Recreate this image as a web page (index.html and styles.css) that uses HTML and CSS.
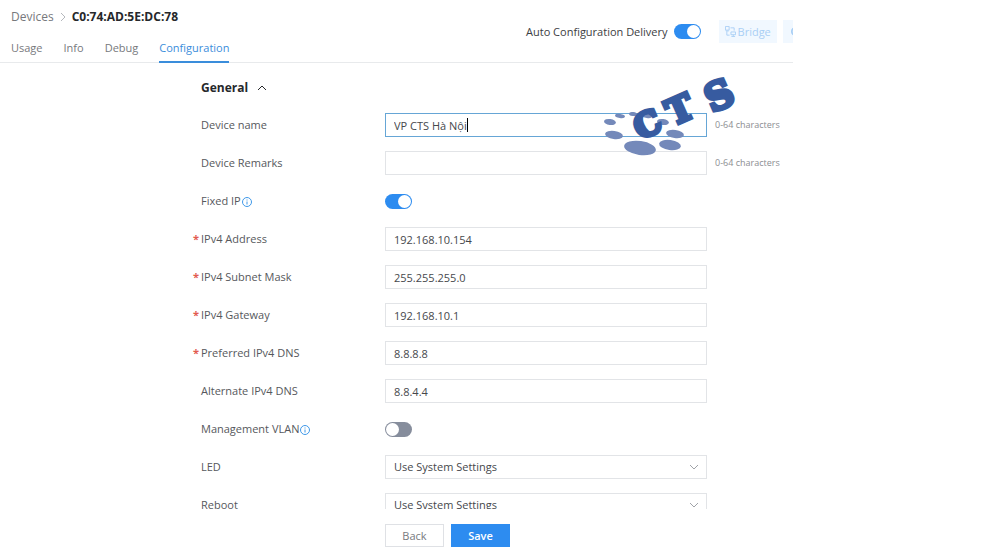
FILE: index.html
```html
<!DOCTYPE html>
<html lang="en">
<head>
<meta charset="utf-8">
<meta name="viewport" content="width=device-width, initial-scale=1">
<title>Device Configuration</title>
<link rel="stylesheet" href="styles.css">
</head>
<body>
<div class="app">
  <header class="header">
    <div class="header-main">
      <nav class="crumbs" aria-label="Breadcrumb">
        <a href="#">Devices</a>
        <svg class="crumb-sep" viewBox="0 0 6 10" aria-hidden="true"><path d="M1 1l4 4-4 4"/></svg>
        <strong>C0:74:AD:5E:DC:78</strong>
      </nav>
      <nav class="tabs" aria-label="Sections">
        <a href="#">Usage</a>
        <a href="#">Info</a>
        <a href="#">Debug</a>
        <a href="#" class="active" aria-current="page">Configuration</a>
      </nav>
    </div>
    <div class="actions">
      <label class="delivery" for="auto">Auto Configuration Delivery</label>
      <input class="switch" type="checkbox" id="auto" checked>
      <button class="tool" type="button" disabled>
        <svg class="tool-icon" viewBox="0 0 12 12" aria-hidden="true"><path d="M.5.5h4v4h-4zM6.500 6.500h5v3h-5zM9 9.500v2M7 11.500h4M6 2h4v3M2 6v4h3M1 5.500h3"/></svg>
        Bridge
      </button>
      <button class="tool tool-cut" type="button" disabled aria-label="More actions">
        <svg class="tool-icon" viewBox="0 0 12 12" aria-hidden="true"><circle cx="6" cy="6" r="4"/></svg>
      </button>
    </div>
  </header>

  <form class="form">
    <div class="fields">
      <h2 class="section">General
        <svg class="caret" viewBox="0 0 10 6" aria-hidden="true"><path d="M1 5l4-4 4 4"/></svg>
      </h2>
      <div class="row">
        <label for="name">Device name</label>
        <div class="control">
          <input class="box focused" type="text" id="name" value="VP CTS Hà Nội">
          <span class="cursor" aria-hidden="true"></span>
          <svg class="brand" viewBox="0 0 144 82" role="img" aria-label="CTS">
            <g class="dots">
              <ellipse cx="38" cy="71" rx="16" ry="7" transform="rotate(8 38 71)"/>
              <ellipse cx="68" cy="68" rx="11" ry="5" transform="rotate(8 68 68)"/>
              <ellipse cx="73" cy="57" rx="9" ry="4" transform="rotate(8 73 57)"/>
              <ellipse cx="12" cy="58" rx="9" ry="4" transform="rotate(8 12 58)"/>
              <ellipse cx="8" cy="45" rx="6" ry="3" transform="rotate(8 8 45)"/>
              <ellipse cx="18" cy="39" rx="5" ry="2" transform="rotate(8 18 39)"/>
              <ellipse cx="31" cy="37" rx="4" ry="2" transform="rotate(8 31 37)"/>
              <ellipse cx="45" cy="39" rx="5" ry="2" transform="rotate(8 45 39)"/>
              <ellipse cx="61" cy="45" rx="6" ry="3" transform="rotate(8 61 45)"/>
            </g>
            <g class="letters">
              <text x="38" y="63" font-size="33" transform="rotate(-24 38 63)">C</text>
              <text x="71" y="49" font-size="35" transform="rotate(-24 71 49)">T</text>
              <text x="110" y="36" font-size="38" transform="rotate(-24 110 36)">S</text>
            </g>
          </svg>
        </div>
        <span class="hint">0-64 characters</span>
      </div>
      <div class="row">
        <label for="remarks">Device Remarks</label>
        <div class="control"><input class="box" type="text" id="remarks"></div>
        <span class="hint">0-64 characters</span>
      </div>
      <div class="row">
        <label for="fixed">Fixed IP<svg class="info" viewBox="0 0 10 10" aria-hidden="true"><circle cx="5" cy="5" r="4.500"/><path d="M5 4.500v3M5 2.500v1"/></svg></label>
        <div class="control"><input class="switch" type="checkbox" id="fixed" checked></div>
      </div>
      <div class="row">
        <label class="required" for="ip">IPv4 Address</label>
        <div class="control"><input class="box" type="text" id="ip" value="192.168.10.154"></div>
      </div>
      <div class="row">
        <label class="required" for="mask">IPv4 Subnet Mask</label>
        <div class="control"><input class="box" type="text" id="mask" value="255.255.255.0"></div>
      </div>
      <div class="row">
        <label class="required" for="gateway">IPv4 Gateway</label>
        <div class="control"><input class="box" type="text" id="gateway" value="192.168.10.1"></div>
      </div>
      <div class="row">
        <label class="required" for="dns1">Preferred IPv4 DNS</label>
        <div class="control"><input class="box" type="text" id="dns1" value="8.8.8.8"></div>
      </div>
      <div class="row">
        <label for="dns2">Alternate IPv4 DNS</label>
        <div class="control"><input class="box" type="text" id="dns2" value="8.8.4.4"></div>
      </div>
      <div class="row">
        <label for="vlan">Management VLAN<svg class="info" viewBox="0 0 10 10" aria-hidden="true"><circle cx="5" cy="5" r="4.500"/><path d="M5 4.500v3M5 2.500v1"/></svg></label>
        <div class="control"><input class="switch" type="checkbox" id="vlan"></div>
      </div>
      <div class="row">
        <label for="led">LED</label>
        <div class="control">
          <select class="box" id="led"><option>Use System Settings</option></select>
          <svg class="arrow" viewBox="0 0 10 6" aria-hidden="true"><path d="M1 1l4 4 4-4"/></svg>
        </div>
      </div>
      <div class="row">
        <label for="reboot">Reboot</label>
        <div class="control">
          <select class="box" id="reboot"><option>Use System Settings</option></select>
          <svg class="arrow" viewBox="0 0 10 6" aria-hidden="true"><path d="M1 1l4 4 4-4"/></svg>
        </div>
      </div>
    </div>
    <footer class="footer">
      <div class="buttons">
        <button class="btn" type="button">Back</button>
        <button class="btn primary" type="submit">Save</button>
      </div>
    </footer>
  </form>
</div>
</body>
</html>
```

FILE: styles.css
```css
* { box-sizing: border-box; }

body {
  margin: 0;
  background: #fff;
  color: #56585c;
  font: 11px/18px "Open Sans", sans-serif;
}

a { color: inherit; text-decoration: none; }
button, input, select { font: inherit; color: inherit; }
svg { fill: none; stroke: currentColor; }

.app {
  display: flex;
  flex-direction: column;
  width: 80%;
  height: 100vh;
  overflow: hidden;
}

.header {
  display: flex;
  flex: none;
  justify-content: space-between;
  border-bottom: 1px solid #e8eaec;
}

.header-main { padding: 8px 0 0 11px; }

.crumbs { display: flex; align-items: center; gap: 6px; color: #77797d; font-size: 12px; }
.crumbs strong { color: #26282b; }
.crumb-sep { width: 6px; height: 10px; color: #b5b8bd; }

.tabs { display: flex; gap: 21px; margin: 8px 0 -1px; color: #77797d; }
.tabs a { padding: 5px 0 4px; border-bottom: 2px solid transparent; }
.tabs .active { color: #3a8ddb; border-color: #3a8ddb; }

.actions { display: flex; align-items: center; align-self: flex-start; margin-top: 20px; }
.delivery { margin-right: 6px; color: #3c3e42; }

.tool {
  display: flex;
  align-items: center;
  gap: 2px;
  height: 23px;
  margin-left: 18px;
  padding: 0 6px;
  border: 0;
  background: #f1f8ff;
  color: #a9cff5;
}
.tool-icon { width: 11px; height: 11px; }
.tool-cut { width: 10px; margin-left: 6px; padding: 0 0 0 7px; overflow: hidden; }
.tool-cut .tool-icon { flex: none; stroke-width: 2; }

.switch {
  appearance: none;
  flex: none;
  display: block;
  width: 27px;
  height: 15px;
  margin: 0;
  padding: 1px;
  border-radius: 8px;
  background: #868d9c;
}
.switch::before {
  content: "";
  display: block;
  width: 13px;
  height: 13px;
  border-radius: 50%;
  background: #fff;
}
.switch:checked { background: #2d8cf0; }
.switch:checked::before { margin-left: auto; }

.form { display: flex; flex: 1; flex-direction: column; min-height: 0; }
.fields { flex: 1; min-height: 0; overflow: hidden; padding: 15px 0 0 201px; }

.section {
  display: flex;
  align-items: center;
  gap: 9px;
  margin: 0 0 8px;
  color: #26282b;
  font-size: 12px;
  line-height: 20px;
}
.caret { width: 10px; height: 6px; }

.row {
  display: grid;
  grid-template-columns: 184px 322px 1fr;
  align-items: center;
  height: 38px;
}
.row label { font-weight: 500; }
.required { margin-left: -8px; }
.required::before { content: "*"; margin-right: 2px; color: #e25b50; font-weight: 700; }

.info { width: 10px; height: 10px; margin-left: 1px; vertical-align: -2px; color: #3f98e8; }

.control { position: relative; }
.box {
  appearance: none;
  display: block;
  width: 100%;
  height: 24px;
  padding: 0 8px;
  border: 1px solid #e2e4e7;
  border-radius: 0;
  outline: 0;
  background: #fff;
  color: #46484c;
}
.focused { border-color: #66a6d6; }
.cursor { position: absolute; top: 5px; left: 82px; width: 1px; height: 14px; background: #000; }
.arrow { position: absolute; top: 9px; right: 8px; width: 10px; height: 6px; color: #a0a3a8; }
.hint { padding-left: 8px; color: #8c8e92; font-size: 9px; white-space: nowrap; }

.brand { position: absolute; top: -36px; left: 217px; z-index: 1; width: 144px; height: 82px; stroke: none; pointer-events: none; }
.dots { fill: #7489ba; }
.letters { fill: #375ba0; stroke: #375ba0; stroke-width: 4; font-family: "DejaVu Serif", serif; font-weight: bold; }

.footer { flex: none; padding: 15px 0 10px 385px; }
.buttons { display: flex; gap: 7px; }
.btn {
  width: 59px;
  height: 23px;
  padding: 0;
  border: 1px solid #dfe1e5;
  background: #fff;
  color: #77797d;
}
.primary { border-color: #2d8cf0; background: #2d8cf0; color: #fff; font-weight: 600; }
```
